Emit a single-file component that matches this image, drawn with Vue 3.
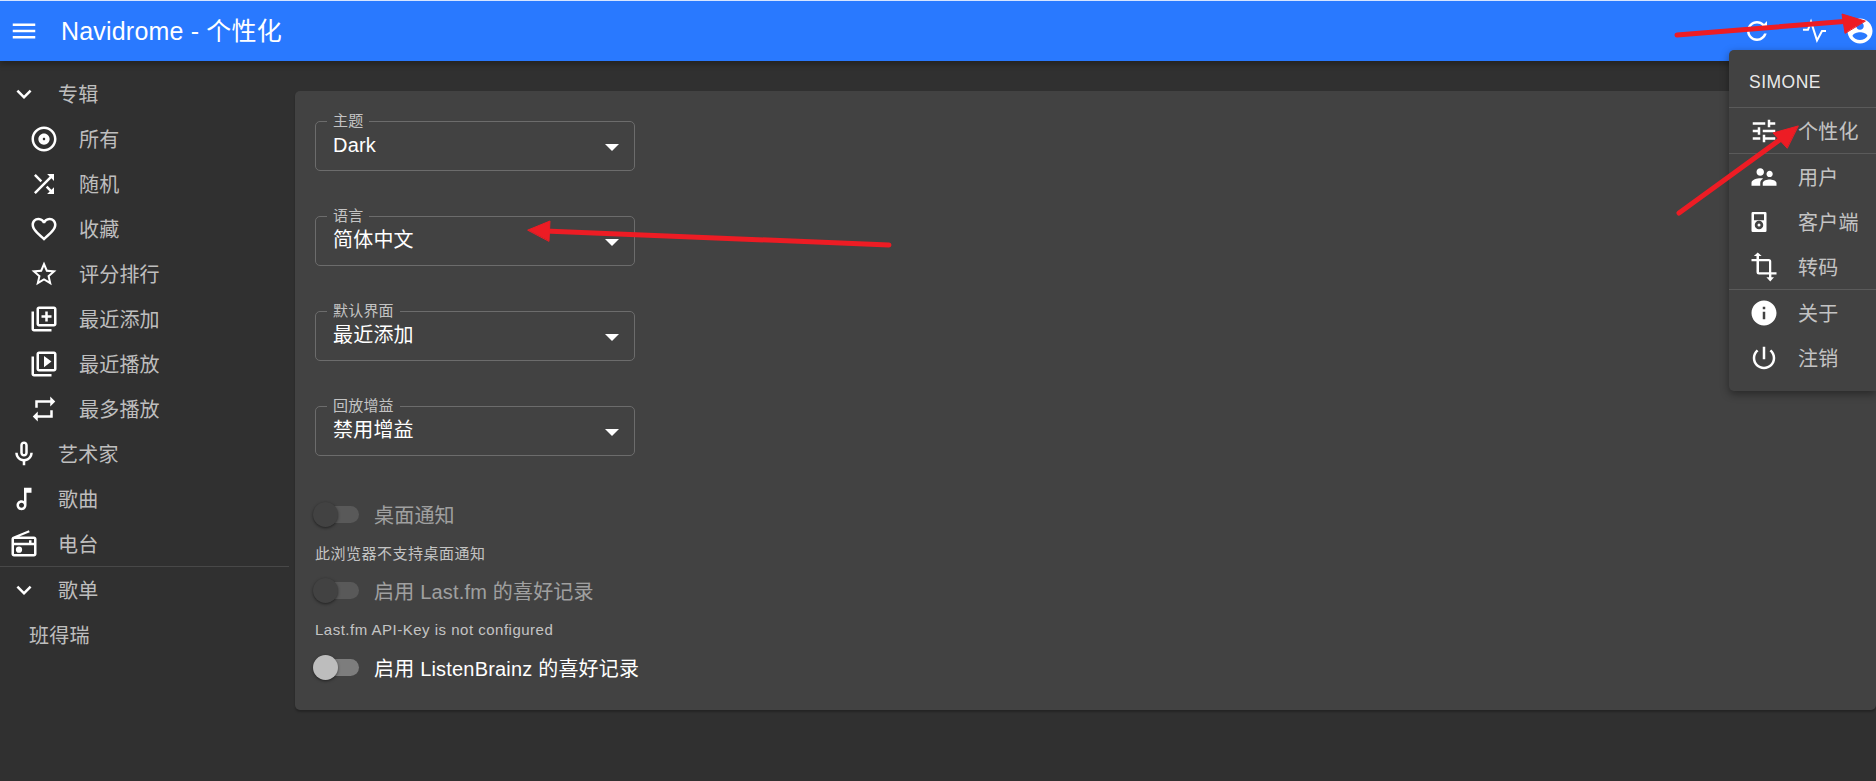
<script setup>
const albumItems = [
  { label: '所有', d: 'M12 2C6.48 2 2 6.48 2 12s4.48 10 10 10 10-4.48 10-10S17.52 2 12 2zm0 18c-4.41 0-8-3.59-8-8s3.59-8 8-8 8 3.59 8 8-3.59 8-8 8zm0-12.5c-2.49 0-4.5 2.01-4.5 4.5s2.01 4.5 4.5 4.5 4.5-2.01 4.5-4.5-2.01-4.5-4.5-4.5zm0 5.5c-.55 0-1-.45-1-1s.45-1 1-1 1 .45 1 1-.45 1-1 1z' },
  { label: '随机', d: 'M10.59 9.17L5.41 4 4 5.41l5.17 5.17 1.42-1.41zM14.5 4l2.04 2.04L4 18.59 5.41 20 17.96 7.46 20 9.5V4h-5.5zm.33 9.41l-1.41 1.41 3.13 3.13L14.5 20H20v-5.5l-2.04 2.04-3.13-3.13z' },
  { label: '收藏', d: 'M16.5 3c-1.74 0-3.41.81-4.5 2.09C10.91 3.81 9.24 3 7.5 3 4.42 3 2 5.42 2 8.5c0 3.78 3.4 6.86 8.55 11.54L12 21.35l1.45-1.32C18.6 15.36 22 12.28 22 8.5 22 5.42 19.58 3 16.5 3zm-4.4 15.55l-.1.1-.1-.1C7.14 14.24 4 11.39 4 8.5 4 6.5 5.5 5 7.5 5c1.54 0 3.04.99 3.57 2.36h1.87C13.46 5.99 14.96 5 16.5 5c2 0 3.5 1.5 3.5 3.5 0 2.89-3.14 5.74-7.9 10.05z' },
  { label: '评分排行', d: 'M22 9.24l-7.19-.62L12 2 9.19 8.63 2 9.24l5.46 4.73L5.82 21 12 17.27 18.18 21l-1.63-7.03L22 9.24zM12 15.4l-3.76 2.27 1-4.28-3.32-2.88 4.38-.38L12 6.1l1.71 4.04 4.38.38-3.32 2.88 1 4.28L12 15.4z' },
  { label: '最近添加', d: 'M4 6H2v14c0 1.1.9 2 2 2h14v-2H4V6zm16-4H8c-1.1 0-2 .9-2 2v12c0 1.1.9 2 2 2h12c1.1 0 2-.9 2-2V4c0-1.1-.9-2-2-2zm0 14H8V4h12v12zm-7-2h2v-3h3V9h-3V6h-2v3h-3v2h3z' },
  { label: '最近播放', d: 'M4 6H2v14c0 1.1.9 2 2 2h14v-2H4V6zm16-4H8c-1.1 0-2 .9-2 2v12c0 1.1.9 2 2 2h12c1.1 0 2-.9 2-2V4c0-1.1-.9-2-2-2zm0 14H8V4h12v12zM12 5.5v9l6-4.5z' },
  { label: '最多播放', d: 'M7 7h10v3l4-4-4-4v3H5v6h2V7zm10 10H7v-3l-4 4 4 4v-3h12v-6h-2v4z' },
]
const topItems = [
  { label: '艺术家', d: 'M12 14c1.66 0 3-1.34 3-3V5c0-1.66-1.34-3-3-3S9 3.34 9 5v6c0 1.66 1.34 3 3 3zm-1-9c0-.55.45-1 1-1s1 .45 1 1v6c0 .55-.45 1-1 1s-1-.45-1-1V5zm6 6c0 2.76-2.24 5-5 5s-5-2.24-5-5H5c0 3.53 2.61 6.43 6 6.92V21h2v-3.08c3.39-.49 6-3.39 6-6.92h-2z' },
  { label: '歌曲', d: 'M12 3l.01 10.55c-.59-.34-1.27-.55-2-.55C7.79 13 6 14.79 6 17s1.79 4 4.01 4S14 19.21 14 17V7h4V3h-6zm-1.99 16c-1.1 0-2-.9-2-2s.9-2 2-2 2 .9 2 2-.9 2-2 2z' },
  { label: '电台', d: 'M20 6H8.3l8.26-3.34L15.88 1 3.24 6.15C2.51 6.43 2 7.17 2 8v12c0 1.1.89 2 2 2h16c1.11 0 2-.9 2-2V8c0-1.11-.89-2-2-2zm0 2v3h-2V9h-2v2H4V8h16zM4 20v-7h16v7H4zm4-6a2.5 2.5 0 1 0 0 5 2.5 2.5 0 0 0 0-5z' },
]
const chevron = 'M16.59 8.59L12 13.17 7.41 8.59 6 10l6 6 6-6z'
const selects = [
  { label: '主题', value: 'Dark' },
  { label: '语言', value: '简体中文' },
  { label: '默认界面', value: '最近添加' },
  { label: '回放增益', value: '禁用增益' },
]
const menuGroups = [
  [{ label: '个性化', d: 'M3 17v2h6v-2H3zM3 5v2h10V5H3zm10 16v-2h8v-2h-8v-2h-2v6h2zM7 9v2H3v2h4v2h2V9H7zm14 4v-2H11v2h10zm-6-4h2V7h4V5h-4V3h-2v6z' }],
  [
    { label: '用户', d: 'M16.5 12c1.38 0 2.49-1.12 2.49-2.5S17.88 7 16.5 7C15.12 7 14 8.12 14 9.5s1.12 2.5 2.5 2.5zM9 11c1.66 0 2.99-1.34 2.99-3S10.66 5 9 5C7.34 5 6 6.34 6 8s1.34 3 3 3zm7.5 3c-1.83 0-5.5.92-5.5 2.75V19h11v-2.25c0-1.83-3.67-2.75-5.5-2.75zM9 13c-2.33 0-7 1.17-7 3.5V19h7v-2.25c0-.85.33-2.34 2.37-3.47C10.5 13.1 9.66 13 9 13z' },
    { label: '客户端', d: 'M3 4h10a1 1 0 0 1 1 1v14a1 1 0 0 1-1 1H3a1 1 0 0 1-1-1V5a1 1 0 0 1 1-1zM4 5.800v4.700h8V5.800H4zM8 11a3.400 3.400 0 1 0 0 6.800 3.400 3.400 0 0 0 0-6.800zm0 2.200a1.200 1.200 0 1 1 0 2.400 1.200 1.200 0 0 1 0-2.400z', evenodd: true },
    { label: '转码', d: 'M2 5.500H15.800a2 2 0 0 1 2 2V16.200h4.200v1.700h-4.100v2.300h2.100L17 23.500l-3.100-3.300H16V17.900H8a2 2 0 0 1-2-2V7.300H2V5.500h4V3.200H3.900L7 .3 10.100 3.200H8v2.300zM8 7.300v8.900h8V7.300H8z', evenodd: true },
  ],
  [
    { label: '关于', d: 'M12 2C6.48 2 2 6.48 2 12s4.48 10 10 10 10-4.48 10-10S17.52 2 12 2zm1 15h-2v-6h2v6zm0-8h-2V7h2v2z' },
    { label: '注销', d: 'M13 3h-2v10h2V3zm4.83 2.17l-1.42 1.42C17.99 7.86 19 9.81 19 12c0 3.87-3.13 7-7 7s-7-3.13-7-7c0-2.19 1.01-4.14 2.58-5.42L6.17 5.17C4.23 6.82 3 9.26 3 12c0 4.97 4.03 9 9 9s9-4.03 9-9c0-2.74-1.23-5.18-3.17-6.83z' },
  ],
]
</script>

<template>
  <div class="page">
    <header class="bar">
      <svg class="icon burger" viewBox="0 0 24 24"><path d="M3 18h18v-2H3v2zm0-5h18v-2H3v2zm0-7v2h18V6H3z" /></svg>
      <h1 class="title">Navidrome - 个性化</h1>
      <svg class="icon refresh" viewBox="0 0 24 24"><path d="M17.65 6.35C16.2 4.9 14.21 4 12 4c-4.42 0-7.99 3.58-7.99 8s3.57 8 7.99 8c3.73 0 6.84-2.55 7.73-6h-2.08c-.82 2.33-3.04 4-5.65 4-3.31 0-6-2.69-6-6s2.69-6 6-6c1.66 0 3.14.69 4.22 1.78L13 11h7V4l-2.35 2.35z" /></svg>
      <svg class="icon pulse" viewBox="0 0 24 24"><path d="M2.400 11H6.400L8.800 4.500 13.600 19.500 17.600 12H20.800" fill="none" stroke="#fff" stroke-width="1.600" /></svg>
      <svg class="icon account" viewBox="0 0 24 24"><path d="M12 2C6.48 2 2 6.48 2 12s4.48 10 10 10 10-4.48 10-10S17.52 2 12 2zm0 3c1.66 0 3 1.34 3 3s-1.34 3-3 3-3-1.34-3-3 1.34-3 3-3zm0 14.200c-2.500 0-4.710-1.280-6-3.220.030-1.990 4-3.080 6-3.080 1.990 0 5.970 1.090 6 3.080-1.290 1.940-3.500 3.220-6 3.220z" /></svg>
    </header>

    <div class="body">
      <nav class="side">
        <div class="row">
          <svg class="icon" viewBox="0 0 24 24"><path :d="chevron" /></svg>
          <span>专辑</span>
        </div>
        <div v-for="item in albumItems" :key="item.label" class="row nested">
          <svg class="icon" viewBox="0 0 24 24"><path :d="item.d" /></svg>
          <span>{{ item.label }}</span>
        </div>
        <div v-for="item in topItems" :key="item.label" class="row">
          <svg class="icon" viewBox="0 0 24 24"><path :d="item.d" fill-rule="evenodd" /></svg>
          <span>{{ item.label }}</span>
        </div>
        <div class="side-rule"></div>
        <div class="row">
          <svg class="icon" viewBox="0 0 24 24"><path :d="chevron" /></svg>
          <span>歌单</span>
        </div>
        <div class="row plain"><span>班得瑞</span></div>
      </nav>

      <main class="card">
        <div v-for="s in selects" :key="s.label" class="select">
          <span class="select-label">{{ s.label }}</span>
          <span class="select-value">{{ s.value }}</span>
          <span class="caret"></span>
        </div>

        <div class="switch-row disabled first">
          <span class="switch"><span class="track"></span><span class="thumb"></span></span>
          <span class="switch-text">桌面通知</span>
        </div>
        <p class="helper">此浏览器不支持桌面通知</p>
        <div class="switch-row disabled">
          <span class="switch"><span class="track"></span><span class="thumb"></span></span>
          <span class="switch-text">启用 Last.fm 的喜好记录</span>
        </div>
        <p class="helper last">Last.fm API-Key is not configured</p>
        <div class="switch-row">
          <span class="switch"><span class="track"></span><span class="thumb"></span></span>
          <span class="switch-text">启用 ListenBrainz 的喜好记录</span>
        </div>
      </main>
    </div>

    <div class="menu">
      <div class="menu-user">SIMONE</div>
      <div v-for="(group, i) in menuGroups" :key="i" class="menu-group">
        <div v-for="item in group" :key="item.label" class="menu-item">
          <svg class="icon" viewBox="0 0 24 24"><path :d="item.d" :fill-rule="item.evenodd ? 'evenodd' : 'nonzero'" /></svg>
          <span>{{ item.label }}</span>
        </div>
      </div>
    </div>

    <svg class="arrows" viewBox="0 0 1876 781">
      <g fill="#ed1c24" stroke="#ed1c24" stroke-linecap="round" stroke-linejoin="round">
        <path d="M1677 35L1850 21" fill="none" stroke-width="5" />
        <path d="M1865 21L1842 14L1845 33z" stroke-width="1" />
        <path d="M1679 213L1785 136" fill="none" stroke-width="5" />
        <path d="M1798 126L1773 133L1787 148z" stroke-width="1" />
        <path d="M889 245L545 231" fill="none" stroke-width="5" />
        <path d="M528 230L550 221L549 241z" stroke-width="1" />
      </g>
    </svg>
  </div>
</template>

<style scoped>
.page {
  position: relative;
  width: 1876px;
  height: 781px;
  overflow: hidden;
  background: #303030;
  color: #fff;
  font-family: "Liberation Sans", "Noto Sans CJK SC", sans-serif;
  letter-spacing: 0.19px;
}
.icon {
  display: block;
  flex: none;
  width: 30px;
  height: 30px;
  fill: #fff;
}
.bar {
  display: flex;
  align-items: center;
  height: 60px;
  border-top: 1px solid #d6e4ff;
  padding-left: 9px;
  background: #2979ff;
  box-shadow: 0 3px 6px rgba(0, 0, 0, 0.3);
}
.title {
  flex: 1;
  margin: 0 0 0 22px;
  font-size: 25px;
  font-weight: 400;
  line-height: 1;
}
.refresh { margin-right: 28px; }
.pulse { margin-right: 15px; }
.account { margin-right: 1px; }
.body {
  display: flex;
  height: 720px;
}
.side {
  flex: none;
  width: 289px;
  margin-right: 6px;
  padding-top: 10px;
}
.row {
  display: flex;
  align-items: center;
  height: 45px;
  padding-left: 9px;
  color: rgba(255, 255, 255, 0.7);
  font-size: 20px;
}
.row span { margin-left: 19px; }
.row.nested span { margin-left: 20px; }
.row.nested { padding-left: 29px; }
.row.plain { padding-left: 9px; }
.row.plain span { margin-left: 20px; }
.side-rule {
  height: 1px;
  background: #484848;
}
.card {
  flex: 1;
  align-self: flex-start;
  margin-top: 30px;
  padding: 30px 20px 19px;
  background: #424242;
  border-radius: 5px;
  box-shadow: 0 2px 2px rgba(0, 0, 0, 0.25);
}
.select {
  position: relative;
  display: flex;
  align-items: center;
  box-sizing: border-box;
  width: 320px;
  height: 50px;
  margin-bottom: 45px;
  padding: 0 17px 2px;
  border: 1px solid #6c6c6c;
  border-radius: 5px;
}
.select-label {
  position: absolute;
  top: -10px;
  left: 11px;
  padding: 0 6px;
  background: #424242;
  color: rgba(255, 255, 255, 0.7);
  font-size: 15px;
  line-height: 18px;
}
.select-value {
  font-size: 20px;
  line-height: 24px;
}
.caret {
  position: absolute;
  top: 22px;
  right: 15px;
  border-left: 7px solid transparent;
  border-right: 7px solid transparent;
  border-top: 7px solid #fff;
}
.switch-row {
  display: flex;
  align-items: center;
  height: 47px;
  font-size: 20px;
}
.switch-row.first { margin-top: -10px; }
.switch {
  position: relative;
  flex: none;
  width: 61px;
  height: 25px;
  margin-left: -2px;
}
.track {
  position: absolute;
  top: 4px;
  left: 3px;
  width: 43px;
  height: 17px;
  border-radius: 9px;
  background: #7d7d7d;
}
.thumb {
  position: absolute;
  top: 0;
  left: 0;
  width: 25px;
  height: 25px;
  border-radius: 50%;
  background: #bdbdbd;
  box-shadow: 0 1px 3px rgba(0, 0, 0, 0.5);
}
.disabled .track { background: #595959; }
.disabled .thumb { background: #424242; }
.disabled .switch-text { color: rgba(255, 255, 255, 0.5); }
.helper {
  margin: 6px 0 3px;
  color: rgba(255, 255, 255, 0.7);
  font-size: 15px;
  line-height: 20px;
  letter-spacing: 0.5px;
}
.helper.last { margin-bottom: 4px; }
.menu {
  position: absolute;
  top: 50px;
  left: 1729px;
  width: 147px;
  height: 341px;
  padding-top: 10px;
  box-sizing: border-box;
  background: #424242;
  border-radius: 5px 0 0 5px;
  box-shadow: 0 3px 8px rgba(0, 0, 0, 0.4);
}
.menu-user {
  height: 47px;
  padding: 11px 0 0 20px;
  box-sizing: border-box;
  font-size: 17.5px;
  line-height: 22px;
  letter-spacing: 0.5px;
  color: rgba(255, 255, 255, 0.9);
}
.menu-group { border-top: 1px solid #5a5a5a; }
.menu-item {
  display: flex;
  align-items: center;
  height: 45px;
  padding-left: 20px;
  color: rgba(255, 255, 255, 0.7);
  font-size: 20px;
}
.menu-item .icon { margin-right: 19px; }
.arrows {
  position: absolute;
  top: 0;
  left: 0;
  width: 1876px;
  height: 781px;
  pointer-events: none;
}
</style>

<style>
body { background: #303030; }
</style>
